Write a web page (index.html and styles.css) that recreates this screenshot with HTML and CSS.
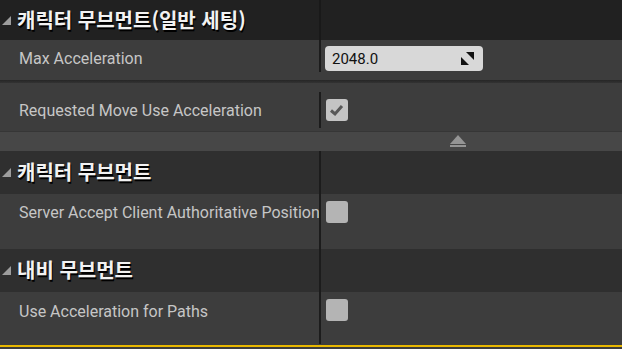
FILE: index.html
```html
<!DOCTYPE html>
<html lang="ko">
<head>
  <meta charset="UTF-8">
  <meta name="viewport" content="width=device-width, initial-scale=1.0">
  <title>Details</title>
  <link rel="stylesheet" href="styles.css">
</head>
<body>
  <div class="panel">
    <div class="category category-top">
      <div class="cat-name">
        <svg class="arrow" width="9" height="9" viewBox="0 0 9 9"><polygon points="0,9 9,9 9,0" fill="#9d9d9d"/></svg>
        <span>캐릭터 무브먼트(일반 세팅)</span>
      </div>
      <div class="split"></div>
      <div class="cat-rest"></div>
    </div>

    <div class="prop prop-accel">
      <div class="name">Max Acceleration</div>
      <div class="split"></div>
      <div class="value">
        <div class="number-box">
          <span>2048.0</span>
          <svg class="drag-icon" width="15" height="15" viewBox="0 0 15 15">
            <polygon points="6,1 14,1 14,9" fill="#111"/>
            <polygon points="1,6 1,14 9,14" fill="#111"/>
          </svg>
        </div>
      </div>
    </div>
    <div class="gap"></div>

    <div class="prop prop-req">
      <div class="name">Requested Move Use Acceleration</div>
      <div class="split"></div>
      <div class="value">
        <div class="check checked">
          <svg width="22" height="22" viewBox="0 0 22 22"><polyline points="5,11.5 9,15 16,7" fill="none" stroke="#585858" stroke-width="3"/></svg>
        </div>
      </div>
    </div>

    <div class="collapse">
      <svg width="16" height="12" viewBox="0 0 16 12">
        <polygon points="8,0 16,9 0,9" fill="#959595"/>
        <rect x="0" y="10" width="16" height="2" fill="#959595"/>
      </svg>
    </div>

    <div class="category">
      <div class="cat-name">
        <svg class="arrow" width="9" height="9" viewBox="0 0 9 9"><polygon points="0,9 9,9 9,0" fill="#9d9d9d"/></svg>
        <span>캐릭터 무브먼트</span>
      </div>
      <div class="split"></div>
      <div class="cat-rest"></div>
    </div>

    <div class="prop prop-server">
      <div class="name">Server Accept Client Authoritative Position</div>
      <div class="split"></div>
      <div class="value">
        <div class="check"></div>
      </div>
    </div>

    <div class="category">
      <div class="cat-name">
        <svg class="arrow" width="9" height="9" viewBox="0 0 9 9"><polygon points="0,9 9,9 9,0" fill="#9d9d9d"/></svg>
        <span>내비 무브먼트</span>
      </div>
      <div class="split"></div>
      <div class="cat-rest"></div>
    </div>

    <div class="prop prop-paths">
      <div class="name">Use Acceleration for Paths</div>
      <div class="split"></div>
      <div class="value">
        <div class="check"></div>
      </div>
    </div>

    <div class="foot"></div>
  </div>
</body>
</html>
```

FILE: styles.css
```css
body {
  margin: 0;
  padding: 0;
  background-color: #3d3d3d;
  font-family: Roboto, 'Noto Sans', sans-serif;
  overflow: hidden;
}

.panel {
  width: 622px;
  height: 349px;
  display: flex;
  flex-direction: column;
}

/* category headers */
.category {
  display: flex;
  height: 43px;
  background-color: #2f2f2f;
}

.category-top {
  height: 40px;
  background-color: #212121;
}

.cat-name {
  width: 319px;
  display: flex;
  align-items: center;
  color: #f2f2f2;
  font-family: 'Noto Sans CJK KR', sans-serif;
  font-weight: bold;
  font-size: 20px;
  text-shadow: 1px 2px 0 #000;
  white-space: nowrap;
}

.cat-name .arrow {
  margin-left: 2px;
  margin-right: 6px;
  flex-shrink: 0;
}

.cat-name span {
  margin-top: -2px;
}

.cat-rest {
  flex: 1;
}

.split {
  width: 2px;
  flex-shrink: 0;
  background-color: #1c1c1c;
}

.category-top .split {
  background-color: #191919;
}

/* property rows */
.prop {
  display: flex;
  background-color: #3d3d3d;
}

.name {
  width: 300px;
  padding-left: 19px;
  color: #c6c6c6;
  font-size: 16px;
  line-height: 22px;
  white-space: nowrap;
}

.value {
  flex: 1;
  display: flex;
  align-items: flex-start;
}

.prop-accel {
  height: 40px;
}

.prop-accel .name {
  padding-top: 6px;
  line-height: 25px;
}

.prop-accel .split {
  margin-bottom: 8px;
}

.prop-accel .value {
  padding-top: 6px;
}

.gap {
  height: 3px;
  background: linear-gradient(#262626, #333333);
}

.prop-req {
  height: 48px;
  border-bottom: 1px solid #363636;
}

.prop-req .name {
  padding-top: 17px;
}

.prop-req .value {
  padding-top: 16px;
}

.prop-req .split {
  margin-top: 9px;
  margin-bottom: 3px;
}

.prop-server {
  height: 55px;
}

.prop-paths {
  height: 53px;
}

.prop-server .value,
.prop-paths .value {
  padding-top: 7px;
}

.prop-server .name {
  padding-top: 8px;
}

.prop-paths .name {
  padding-top: 9px;
}

.prop-paths .split {
  margin-bottom: 1px;
}

.number-box {
  margin-left: 4px;
  width: 158px;
  height: 25px;
  box-sizing: border-box;
  padding: 0 8px 0 7px;
  border-radius: 4px;
  background-color: #d8d8d8;
  display: flex;
  align-items: center;
  justify-content: space-between;
  color: #111;
  font-size: 15px;
}

.check {
  margin-left: 5px;
  width: 22px;
  height: 22px;
  border-radius: 3px;
  background-color: #b4b4b4;
}

.check.checked {
  background-color: #c4c4c4;
}

.check svg {
  display: block;
}

/* collapse strip */
.collapse {
  height: 19px;
  background-color: #474747;
  padding-left: 450px;
  box-sizing: border-box;
  padding-top: 3px;
}

.collapse svg {
  display: block;
}

.foot {
  height: 2px;
  background-color: #e8b800;
}
```
